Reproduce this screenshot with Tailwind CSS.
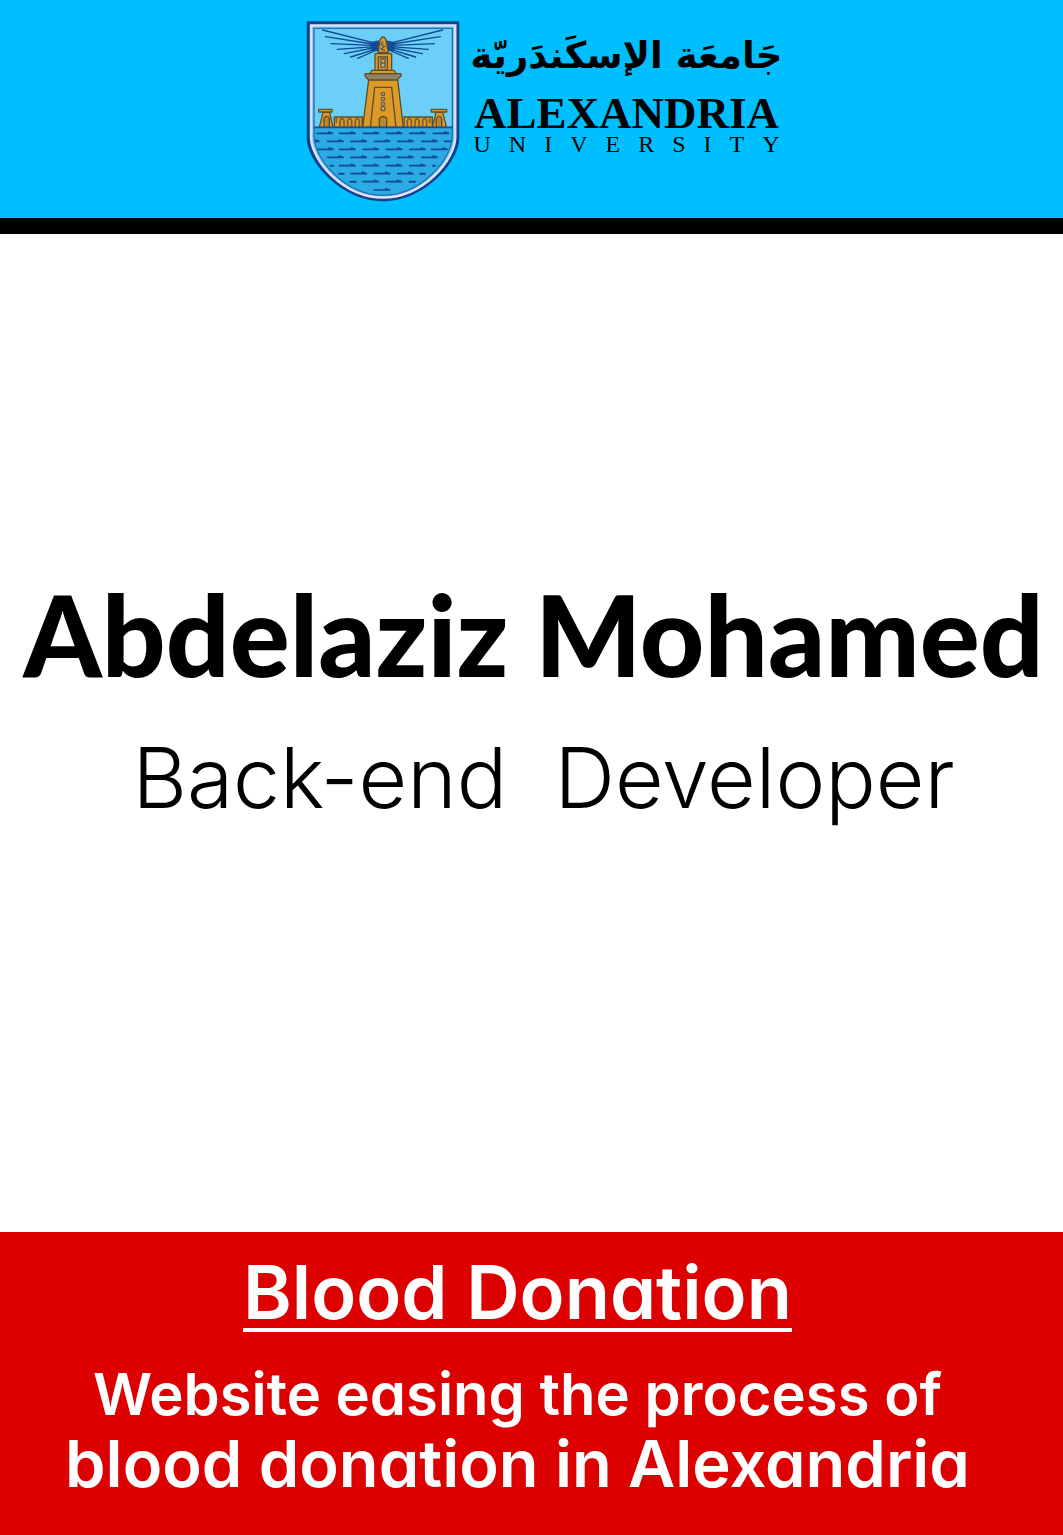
<!DOCTYPE html>
<html lang="en">
<head>
<meta charset="utf-8">
<meta name="viewport" content="width=device-width, initial-scale=1">
<title>Abdelaziz Mohamed – Back-end Developer</title>
<script src="https://cdn.jsdelivr.net/npm/@tailwindcss/browser@4"></script>
</head>
<body class="flex min-h-screen flex-col bg-white text-black">
  <header class="flex justify-center gap-[13px] border-b-16 border-black bg-[#00bfff] pt-5 pb-4 pl-[22px]">
    <svg class="h-[182px] w-[155px] shrink-0" viewBox="33 31 465 546" role="img" aria-label="Alexandria University crest">
      <defs>
        <clipPath id="field"><path d="M57 56H472V380C472 447 388 557 264 557C140 557 57 447 57 380Z"/></clipPath>
        <path id="wave" d="M0 0H46M34 -4L46 0" fill="none" stroke="#134a97" stroke-width="5" stroke-linecap="round"/>
      </defs>
      <path d="M35 35H493V385C493 455 390 575 264 575C138 575 35 455 35 385Z" fill="#0f418f"/>
      <path d="M48 47H481V382C481 451 384 564 264 564C144 564 48 451 48 382Z" fill="#6bcff7" stroke="#dfe2f5" stroke-width="7"/>
      <g clip-path="url(#field)">
        <rect x="50" y="352" width="430" height="215" fill="#2aabe4"/>
        <use href="#wave" x="66" y="371"/><use href="#wave" x="134" y="371"/><use href="#wave" x="205" y="371"/><use href="#wave" x="274" y="371"/><use href="#wave" x="344" y="371"/><use href="#wave" x="415" y="371"/>
        <use href="#wave" x="26" y="395"/><use href="#wave" x="98" y="395"/><use href="#wave" x="168" y="395"/><use href="#wave" x="238" y="395"/><use href="#wave" x="308" y="395"/><use href="#wave" x="380" y="395"/><use href="#wave" x="448" y="395"/>
        <use href="#wave" x="68" y="419"/><use href="#wave" x="134" y="419"/><use href="#wave" x="204" y="419"/><use href="#wave" x="274" y="419"/><use href="#wave" x="344" y="419"/><use href="#wave" x="410" y="419"/>
        <use href="#wave" x="98" y="443"/><use href="#wave" x="168" y="443"/><use href="#wave" x="238" y="443"/><use href="#wave" x="308" y="443"/><use href="#wave" x="380" y="443"/>
        <use href="#wave" x="134" y="468"/><use href="#wave" x="204" y="468"/><use href="#wave" x="274" y="468"/><use href="#wave" x="344" y="468"/>
        <use href="#wave" x="168" y="492"/><use href="#wave" x="238" y="492"/><use href="#wave" x="308" y="492"/>
        <use href="#wave" x="204" y="516"/><use href="#wave" x="274" y="516"/>
        <use href="#wave" x="238" y="541"/>
        <path d="M106 468H114M132 492H146M376 492H390M166 516H182M344 516H360M414 468H420" stroke="#134a97" stroke-width="6" stroke-linecap="round"/>
      </g>
      <path d="M57 56H472V380C472 447 378 557 264 557C150 557 57 447 57 380Z" fill="none" stroke="#2a6cae" stroke-width="4"/>
      <g stroke="#124b93" stroke-width="4" stroke-linecap="round">
        <path d="M255 104L83 61M252 106L91 81M250 108L108 102M250 110L127 119M250 112L148 132M250 116L167 142M252 118L188 146"/>
        <path d="M271 104L443 61M274 106L436 81M276 108L418 102M276 110L400 119M276 112L382 132M276 116L362 142M274 118L340 146"/>
      </g>
      <path d="M226 98L252 92V126L228 120ZM300 98L274 92V126L298 120Z" fill="#124b93"/>
      <g fill="#dd9a27" stroke="#5b5130" stroke-width="4" stroke-linejoin="round">
        <path d="M118 322H202V353H118ZM327 322H412V353H327Z"/>
        <path d="M84 308H104L114 353H73ZM423 308H443L455 353H412ZM71 299H111V307H71ZM409 299H455V307H409Z"/>
        <path d="M87 353V327Q95 312 103 327V353M424 353V327Q432 312 440 327V353" fill="#b98631"/>
        <path d="M221 210H308L325 353H203Z"/>
        <path d="M239 233H290L303 353H226Z"/>
        <path d="M210 192H318V199L306 211H221L210 199Z" fill="#948363"/>
        <path d="M231 182H297L304 192H224Z"/>
        <path d="M240 132H290V182H240Z"/>
        <path d="M250 142H277V181H250Z"/>
        <path d="M249 128L256 88Q264 76 272 88L280 128Z"/>
        <path d="M253 353V326Q264 315 275 326V353Z" fill="#b98631"/>
      </g>
      <g fill="#d9a95a" stroke="#5b5b58" stroke-width="4">
        <path d="M258 148H270V173H258ZM258 160H270"/>
        <circle cx="264" cy="253" r="5"/><circle cx="264" cy="268" r="5"/><circle cx="264" cy="283" r="5"/><circle cx="264" cy="297" r="6"/>
        <path d="M264 95L258 104L269 110L258 118L270 122" fill="none"/>
      </g>
      <path d="M135 353V332Q141 322 147 332V353M158 353V332Q164 322 170 332V353M181 353V332Q187 322 193 332V353M337 353V332Q343 322 349 332V353M360 353V332Q366 322 372 332V353M383 353V332Q389 322 395 332V353M124 323V340M404 323V340" fill="none" stroke="#79602e" stroke-width="5"/>
      <path d="M57 353H472" stroke="#174f96" stroke-width="5"/>
    </svg>
    <div class="flex w-[306px] flex-col items-center whitespace-nowrap">
      <p lang="ar" dir="rtl" class="font-['DejaVu_Sans',sans-serif] text-[37px] leading-[72px] font-bold">جَامعَة الإسكَندَريّة</p>
      <p class="font-['Liberation_Serif',serif] text-[45px] leading-[42px] font-bold">ALEXANDRIA</p>
      <p class="-mr-[18px] font-['Liberation_Serif',serif] text-[24px] leading-5 tracking-[18px]">UNIVERSITY</p>
    </div>
  </header>

  <main class="flex flex-1 flex-col items-center pt-[332px] whitespace-nowrap">
    <h1 class="pl-1 font-[Lato,sans-serif] text-[112px] leading-[136px] font-black">Abdelaziz Mohamed</h1>
    <p class="mt-4 pl-6 font-[Inter,sans-serif] text-[84px] leading-[120px] font-light whitespace-pre">Back-end  Developer</p>
  </main>

  <footer class="flex flex-col items-center bg-[#dc0000] pt-6 pr-7 pb-9 font-[Inter,sans-serif] font-semibold whitespace-nowrap text-white [font-feature-settings:'cv11']">
    <h2 class="border-b-4 border-white text-[74px] leading-[72px] font-semibold">Blood Donation</h2>
    <p class="mt-[27px] text-center">
      <span class="block text-[58px] leading-[70px]">Website easing the process of</span>
      <span class="block text-[65px] leading-[70px]">blood donation in Alexandria</span>
    </p>
  </footer>
</body>
</html>
